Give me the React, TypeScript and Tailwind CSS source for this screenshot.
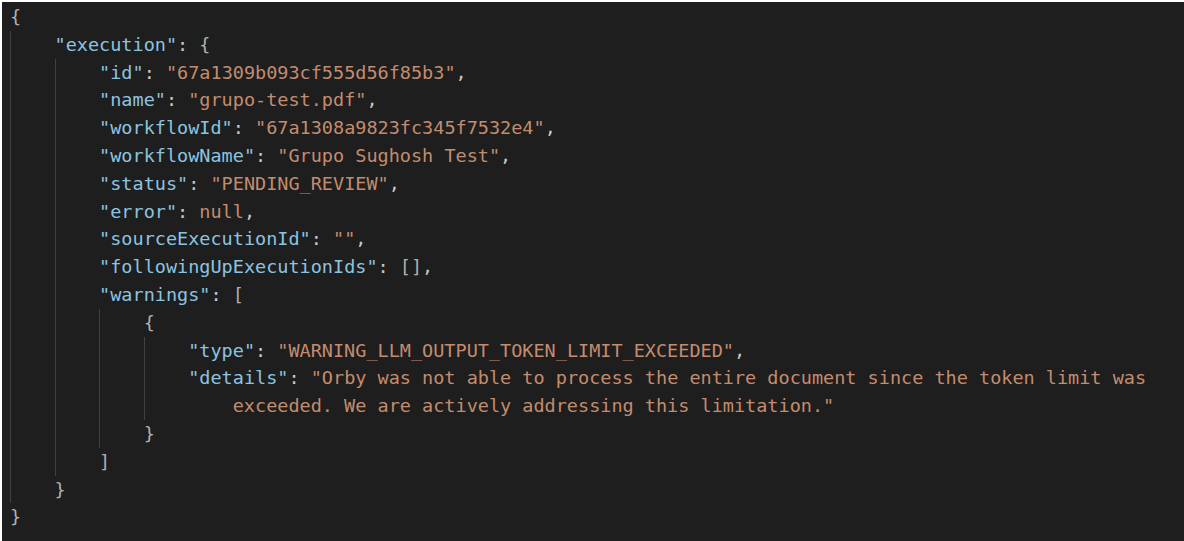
import React from "react";

type Tok = { t: string; c: "k" | "s" | "p" | "b" };

const K = (t: string): Tok => ({ t, c: "k" });
const S = (t: string): Tok => ({ t, c: "s" });
const P = (t: string): Tok => ({ t, c: "p" });
const B = (t: string): Tok => ({ t, c: "b" });

type Line = { guides: number; indent: number; toks: Tok[] };

const lines: Line[] = [
  { guides: 0, indent: 0, toks: [B("{")] },
  { guides: 1, indent: 1, toks: [K('"execution"'), P(": "), B("{")] },
  { guides: 2, indent: 2, toks: [K('"id"'), P(": "), S('"67a1309b093cf555d56f85b3"'), P(",")] },
  { guides: 2, indent: 2, toks: [K('"name"'), P(": "), S('"grupo-test.pdf"'), P(",")] },
  { guides: 2, indent: 2, toks: [K('"workflowId"'), P(": "), S('"67a1308a9823fc345f7532e4"'), P(",")] },
  { guides: 2, indent: 2, toks: [K('"workflowName"'), P(": "), S('"Grupo Sughosh Test"'), P(",")] },
  { guides: 2, indent: 2, toks: [K('"status"'), P(": "), S('"PENDING_REVIEW"'), P(",")] },
  { guides: 2, indent: 2, toks: [K('"error"'), P(": "), S("null"), P(",")] },
  { guides: 2, indent: 2, toks: [K('"sourceExecutionId"'), P(": "), S('""'), P(",")] },
  { guides: 2, indent: 2, toks: [K('"followingUpExecutionIds"'), P(": "), B("[]"), P(",")] },
  { guides: 2, indent: 2, toks: [K('"warnings"'), P(": "), B("[")] },
  { guides: 3, indent: 3, toks: [B("{")] },
  { guides: 4, indent: 4, toks: [K('"type"'), P(": "), S('"WARNING_LLM_OUTPUT_TOKEN_LIMIT_EXCEEDED"'), P(",")] },
  {
    guides: 4,
    indent: 4,
    toks: [
      K('"details"'),
      P(": "),
      S('"Orby was not able to process the entire document since the token limit was'),
    ],
  },
  { guides: 4, indent: 5, toks: [S('exceeded. We are actively addressing this limitation."')] },
  { guides: 3, indent: 3, toks: [B("}")] },
  { guides: 2, indent: 2, toks: [B("]")] },
  { guides: 1, indent: 1, toks: [B("}")] },
  { guides: 0, indent: 0, toks: [B("}")] },
];

const colorClass: Record<Tok["c"], string> = {
  k: "text-[#8cc4e0]",
  s: "text-[#c48c6e]",
  p: "text-[#c8c8c8]",
  b: "text-[#b0b0b0]",
};

export default function App() {
  return (
    <div className="w-[1184px] h-[541px] bg-white pt-[2px] pl-[2px] overflow-hidden">
      <div
        className="w-full h-full bg-[#1e1e1e] pl-[8px] pt-[1px] text-[18.5px] leading-[27.8px] whitespace-pre"
        style={{ fontFamily: '"DejaVu Sans Mono", "Liberation Mono", monospace' }}
      >
        {lines.map((ln, i) => (
          <div key={i} className="flex h-[27.8px]">
            {Array.from({ length: ln.indent }).map((_, j) => (
              <div
                key={j}
                className={
                  "w-[4ch] shrink-0 h-full " +
                  (j < ln.guides ? "border-l border-[#404040]" : "")
                }
              />
            ))}
            <div>
              {ln.toks.map((tk, j) => (
                <span key={j} className={colorClass[tk.c]}>
                  {tk.t}
                </span>
              ))}
            </div>
          </div>
        ))}
      </div>
    </div>
  );
}
